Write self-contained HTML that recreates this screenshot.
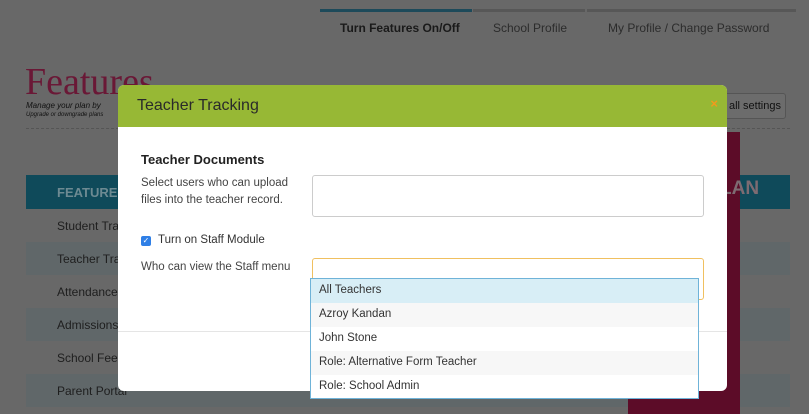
<!DOCTYPE html>
<html><head><style>
*{margin:0;padding:0;box-sizing:border-box}
html,body{width:809px;height:414px;overflow:hidden;background:#686868}
body{font-family:"Liberation Sans",sans-serif;position:relative}
.a{position:absolute}
.tab{font-size:12px;color:#1a1a1a;top:21px}
.row{left:26px;width:764px;height:33px;font-size:12px;color:#1e1e1e;padding:10px 0 0 31px}
.opt{height:24px;font-size:11.5px;color:#333;padding:5px 0 0 8px}
</style></head><body>
<div class="a" style="left:0;top:0;width:809px;height:414px;background:#686868"></div>
<div class="a" style="left:320px;top:9px;width:152px;height:3px;background:#1d4a5a"></div>
<div class="a" style="left:473px;top:9px;width:112px;height:3px;background:#575757"></div>
<div class="a" style="left:587px;top:9px;width:209px;height:3px;background:#575757"></div>
<div class="a tab" style="left:340px;font-weight:bold">Turn Features On/Off</div>
<div class="a tab" style="left:493px;color:#2c2c2c">School Profile</div>
<div class="a tab" style="left:608px;color:#2c2c2c">My Profile / Change Password</div>
<div class="a" style="left:25px;top:60px;font-family:'Liberation Serif',serif;font-size:38px;color:#6a1836">Features</div>
<div class="a" style="left:26px;top:101px;font-size:8px;font-style:italic;color:#111">Manage your plan by</div>
<div class="a" style="left:26px;top:112px;font-size:6px;font-style:italic;color:#111">Upgrade or downgrade plans</div>
<div class="a" style="left:700px;top:93px;width:86px;height:26px;border:1px solid #555;border-radius:3px;background:#6c6c6c;font-size:11px;color:#111;padding:6px 0 0 28px">all settings</div>
<div class="a" style="left:26px;top:128px;width:764px;border-top:1px dashed #555"></div>
<div class="a" style="left:26px;top:175px;width:764px;height:34px;background:#0f4a5a;color:#6d8a92;font-weight:bold;font-size:13px;padding:10px 0 0 31px">FEATURE</div>
<div class="a row" style="top:209px">Student Tracking</div>
<div class="a row" style="top:242px;background:#606769">Teacher Tracking</div>
<div class="a row" style="top:275px">Attendance</div>
<div class="a row" style="top:308px;background:#606769">Admissions</div>
<div class="a row" style="top:341px">School Fees</div>
<div class="a row" style="top:374px;background:#606769">Parent Portal</div>
<div class="a" style="left:628px;top:132px;width:112px;height:282px;background:#5c0c28"></div>
<div class="a" style="left:720px;top:178px;color:#7d6b72;font-weight:bold;font-size:19px">LAN</div>
<div class="a" style="left:118px;top:85px;width:609px;height:306px;background:#fff;border-radius:6px;overflow:hidden">
 <div style="height:42px;background:#97b835;font-size:16px;color:#2a2a2a;padding:12px 0 0 19px">Teacher Tracking</div>
 <div class="a" style="right:9px;top:11px;color:#f39a1c;font-weight:bold;font-size:13px">×</div>
 <div class="a" style="left:23px;top:67px;font-size:13px;font-weight:bold;color:#222">Teacher Documents</div>
 <div class="a" style="left:23px;top:90px;font-size:11.5px;color:#444;line-height:17px">Select users who can upload<br>files into the teacher record.</div>
 <div class="a" style="left:194px;top:90px;width:392px;height:42px;border:1px solid #ccc;border-radius:3px"></div>
 <div class="a" style="left:23px;top:151px;width:10px;height:10px;background:#2f7fe6;border-radius:2px;color:#fff;font-size:8px;line-height:10px;text-align:center">✓</div>
 <div class="a" style="left:40px;top:149px;font-size:11.5px;color:#333">Turn on Staff Module</div>
 <div class="a" style="left:23px;top:176px;font-size:11.5px;color:#444">Who can view the Staff menu</div>
 <div class="a" style="left:194px;top:173px;width:392px;height:42px;border:1px solid #f0c060;border-radius:3px"></div>
 <div class="a" style="left:0;top:246px;width:609px;border-top:1px solid #e5e5e5"></div>
</div>
<div class="a" style="left:310px;top:278px;width:389px;height:121px;background:#fff;border:1px solid #6fb3d8">
 <div class="opt" style="background:#d8eef6">All Teachers</div>
 <div class="opt" style="background:#f7f7f7">Azroy Kandan</div>
 <div class="opt">John Stone</div>
 <div class="opt" style="background:#f7f7f7">Role: Alternative Form Teacher</div>
 <div class="opt">Role: School Admin</div>
</div>
</body></html>
